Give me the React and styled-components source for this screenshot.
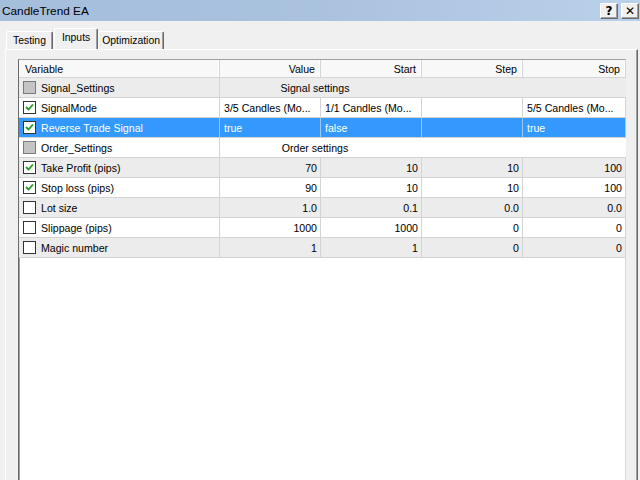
import React from "react";
import styled, { createGlobalStyle } from "styled-components";

const GlobalStyle = createGlobalStyle`
  html, body { margin: 0; padding: 0; background: #f0f0f0; }
  body { font-family: "Liberation Sans", Arial, sans-serif; overflow: hidden; }
  #root { width: 640px; height: 480px; }
`;

const Window = styled.div`
  width: 640px;
  height: 480px;
  display: flex;
  flex-direction: column;
  background: #f0f0f0;
  overflow: hidden;
`;

const TitleBar = styled.div`
  height: 21px;
  flex: none;
  display: flex;
  align-items: center;
  justify-content: space-between;
  background: linear-gradient(to right, #a5bedc, #aac2de 50%, #b9d1ea);
  padding: 0 1px 0 2px;
  box-sizing: border-box;
`;

const Title = styled.span`
  font-size: 11.8px;
  color: #000;
  padding-top: 1px;
`;

const TitleButtons = styled.div`
  display: flex;
  gap: 3px;
  align-items: center;
`;

const CaptionButton = styled.div`
  width: 18px;
  height: 16px;
  box-sizing: border-box;
  background: #f0f0f0;
  border-top: 1px solid #fff;
  border-left: 1px solid #fff;
  border-right: 1px solid #696969;
  border-bottom: 1px solid #696969;
  box-shadow: inset -1px -1px 0 #a0a0a0;
  display: flex;
  align-items: center;
  justify-content: center;
  font-family: "DejaVu Sans", sans-serif;
  font-weight: bold;
  font-size: 12px;
  line-height: 1;
  color: #000;
`;

const Body = styled.div`
  flex: 1;
  display: flex;
  flex-direction: column;
  padding: 7px 2px 0 5px;
  min-height: 0;
`;

const TabRow = styled.div`
  display: flex;
  align-items: flex-end;
  height: 21px;
  padding-left: 1px;
  position: relative;
  z-index: 1;
`;

const Tab = styled.div`
  box-sizing: border-box;
  height: ${(p) => (p.$active ? "21px" : "18px")};
  padding: 3px ${(p) => p.$pad || 6}px 0;
  margin: ${(p) => (p.$active ? "0 0 0 1px" : "0")};
  font-size: 10.4px;
  color: #000;
  background: #f0f0f0;
  border-top: 1px solid #fff;
  border-left: 1px solid #fff;
  border-right: 1px solid #696969;
  box-shadow: inset -1px 0 0 #a0a0a0;
  border-radius: 2px 2px 0 0;
  white-space: nowrap;
`;

const Panel = styled.div`
  flex: 1;
  display: flex;
  flex-direction: column;
  border-top: 1px solid #fff;
  border-left: 1px solid #fff;
  border-right: 1px solid #696969;
  box-shadow: inset -1px 0 0 #a0a0a0;
  padding: 9px 11px 0 12px;
  min-height: 0;
`;

const ListView = styled.div`
  flex: 1;
  background: #fff;
  border-top: 1px solid #a0a0a0;
  border-left: 1px solid #696969;
  border-right: 1px solid #d8d8d8;
  box-shadow: inset 1px 0 0 #a0a0a0;
  display: grid;
  grid-template-columns: 201px 101px 101px 101px 103px;
  grid-auto-rows: 20px;
  grid-template-rows: 18px;
  align-content: start;
  font-size: 10.6px;
  color: #000;
`;

const HeadCell = styled.div`
  display: flex;
  align-items: center;
  justify-content: ${(p) => (p.$left ? "flex-start" : "flex-end")};
  padding: ${(p) => (p.$left ? "0 0 0 6px" : "0 5px 0 0")};
  background: #f8f8f8;
  border-bottom: 1px solid #d5d5d5;
  border-right: 1px solid #d5d5d5;
  box-shadow: inset -1px 0 0 #fff;
  box-sizing: border-box;
  white-space: nowrap;
`;

const Row = styled.div`
  display: contents;
`;

const rowBg = (p) => (p.$selected ? "#3399ff" : p.$odd ? "#ffffff" : "#ececec");

const Cell = styled.div`
  box-sizing: border-box;
  display: flex;
  align-items: center;
  justify-content: ${(p) => (p.$right ? "flex-end" : "flex-start")};
  padding: ${(p) => (p.$right ? "0 3px 0 0" : "0 0 0 4px")};
  background: ${rowBg};
  color: ${(p) => (p.$selected ? "#fff" : "#000")};
  border-bottom: 1px solid #d4d4d4;
  border-right: 1px solid ${(p) => (p.$selected ? "#9cc8f5" : "#d4d4d4")};
  white-space: nowrap;
  overflow: hidden;
`;

const GroupCell = styled(Cell)`
  grid-column: 2 / -1;
  border-right: none;
  padding: 0;
`;

const GroupLabel = styled.span`
  width: 190px;
  text-align: center;
`;

const VarLabel = styled.span`
  margin-left: 5px;
`;

const Box = styled.span`
  width: 13px;
  height: 13px;
  box-sizing: border-box;
  flex: none;
  border: 1px solid #333;
  background: ${(p) => (p.$kind === "group" ? "#c4c4c4" : "#fff")};
  border-color: ${(p) => (p.$kind === "group" ? "#7a7a7a" : "#333")};
  display: flex;
  align-items: center;
  justify-content: center;
`;

function CheckBox({ kind }) {
  return (
    <Box $kind={kind}>
      {kind === "on" && (
        <svg width="9" height="9" viewBox="0 0 9 9">
          <path d="M1 4 L3.5 6.5 L8 1.5" stroke="#1f9a1f" strokeWidth="1.8" fill="none" />
        </svg>
      )}
    </Box>
  );
}

const rows = [
  { name: "Signal_Settings", box: "group", group: "Signal settings" },
  { name: "SignalMode", box: "on", vals: ["3/5 Candles (Mo...", "1/1 Candles (Mo...", "", "5/5 Candles (Mo..."] },
  { name: "Reverse Trade Signal", box: "on", vals: ["true", "false", "", "true"], selected: true },
  { name: "Order_Settings", box: "group", group: "Order settings" },
  { name: "Take Profit (pips)", box: "on", vals: ["70", "10", "10", "100"], num: true },
  { name: "Stop loss (pips)", box: "on", vals: ["90", "10", "10", "100"], num: true },
  { name: "Lot size", box: "off", vals: ["1.0", "0.1", "0.0", "0.0"], num: true },
  { name: "Slippage (pips)", box: "off", vals: ["1000", "1000", "0", "0"], num: true },
  { name: "Magic number", box: "off", vals: ["1", "1", "0", "0"], num: true },
];

export default function App() {
  return (
    <Window>
      <GlobalStyle />
      <TitleBar>
        <Title>CandleTrend EA</Title>
        <TitleButtons>
          <CaptionButton>?</CaptionButton>
          <CaptionButton>✕</CaptionButton>
        </TitleButtons>
      </TitleBar>
      <Body>
        <TabRow>
          <Tab>Testing</Tab>
          <Tab $active $pad={7}>Inputs</Tab>
          <Tab $pad={3}>Optimization</Tab>
        </TabRow>
        <Panel>
          <ListView>
            <HeadCell $left>Variable</HeadCell>
            <HeadCell>Value</HeadCell>
            <HeadCell>Start</HeadCell>
            <HeadCell>Step</HeadCell>
            <HeadCell>Stop</HeadCell>
            {rows.map((r, i) => {
              const odd = i % 2 === 1;
              return (
                <Row key={r.name}>
                  <Cell $odd={odd} $selected={r.selected}>
                    <CheckBox kind={r.box} />
                    <VarLabel>{r.name}</VarLabel>
                  </Cell>
                  {r.group ? (
                    <GroupCell $odd={odd}>
                      <GroupLabel>{r.group}</GroupLabel>
                    </GroupCell>
                  ) : (
                    r.vals.map((v, j) => (
                      <Cell key={j} $odd={odd} $selected={r.selected} $right={r.num}>
                        {v}
                      </Cell>
                    ))
                  )}
                </Row>
              );
            })}
          </ListView>
        </Panel>
      </Body>
    </Window>
  );
}
